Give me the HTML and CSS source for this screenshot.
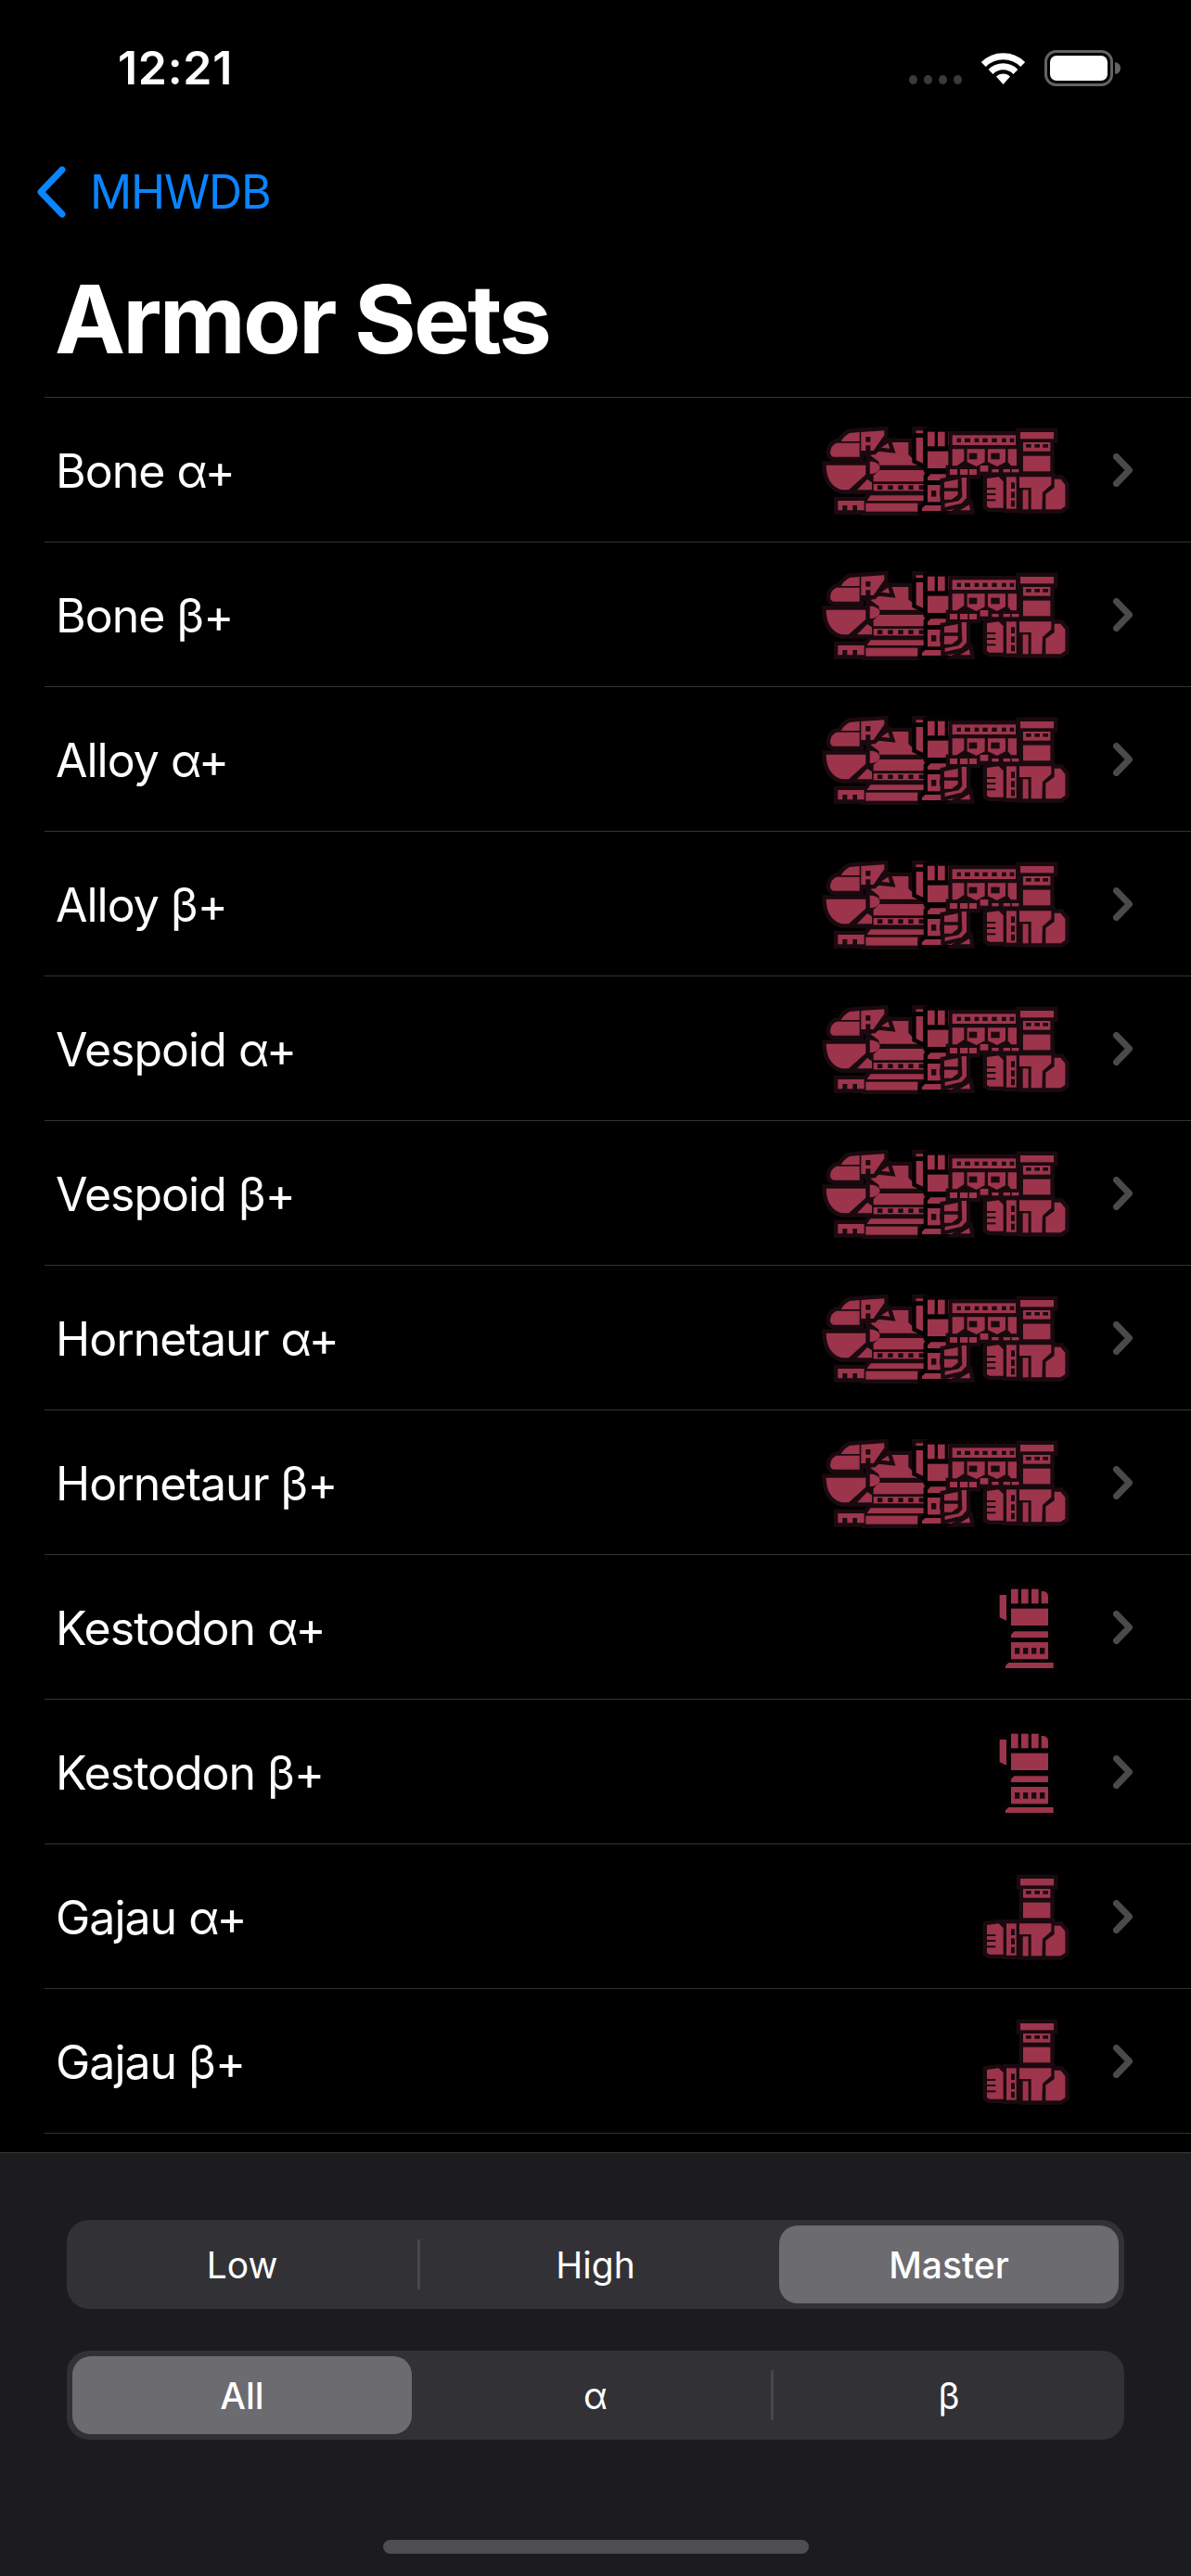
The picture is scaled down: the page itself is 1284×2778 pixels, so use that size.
FILE: index.html
```html
<!DOCTYPE html>
<html lang="en">
<head>
<meta charset="utf-8">
<title>Armor Sets</title>
<link rel="stylesheet" href="styles.css">
</head>
<body>
<svg class="defs" width="0" height="0" aria-hidden="true">
  <defs>
    <g id="chest-s" transform="translate(860 440) scale(.33333)">
      <polygon points="250,145 300,118 300,108 358,108 358,148 395,182 264,182 262,170 235,150"/>
      <path d="M232 170h10q22 4 24 20q-2 16-24 20h-10z"/>
      <polygon points="264,198 410,198 410,235 245,235 245,216"/>
      <rect x="245" y="243" width="165" height="22"/>
      <polygon points="225,295 236,280 410,280 410,297 225,297"/>
      <rect x="220" y="305" width="168" height="27"/>
      <polygon points="192,262 225,228 240,238 240,262"/>
      <polygon points="130,297 215,297 215,328 192,328 192,312 178,312 178,328 160,328 160,312 145,312 145,328 130,328"/>
      <rect x="383" y="70" width="22" height="8"/>
    </g>
    <g id="chest-h" transform="translate(860 440) scale(.33333)">
      <rect x="258" y="247" width="16" height="14"/><rect x="292" y="247" width="16" height="14"/><rect x="325" y="247" width="16" height="14"/><rect x="358" y="247" width="16" height="14"/><rect x="392" y="247" width="16" height="14"/>
    </g>
    <g id="head-s" transform="translate(860 440) scale(.33333)">
      <path d="M140 105q10-18 28-27l32-3v30z"/>
      <path d="M105 140q2-22 20-30h75v45h-85q-10-4-10-15z"/>
      <polygon points="205,75 280,70 280,85 245,135 205,135"/>
      <polygon points="270,125 292,110 298,128"/>
      <path d="M92 182h128v30l-55 50h-22q-50-14-51-80z"/>
    </g>
    <g id="head-h" transform="translate(860 440) scale(.33333)">
      <rect x="220" y="90" width="15" height="17"/><rect x="220" y="118" width="15" height="17"/>
    </g>
    <g id="arm-s" transform="translate(940 442) scale(.33333)">
      <polygon points="143,87 165,87 165,170 143,160"/>
      <rect x="180" y="68" width="23" height="47"/>
      <rect x="213" y="68" width="23" height="47"/>
      <rect x="246" y="68" width="23" height="47"/>
      <path d="M278 75h8q14 3 14 18v22h-22z"/>
      <rect x="180" y="131" width="120" height="55"/>
      <polygon points="190,205 300,205 300,225 180,225 180,215"/>
      <rect x="180" y="240" width="120" height="55"/>
      <polygon points="172,306 317,306 317,324 162,324 162,316"/>
    </g>
    <g id="arm-h" transform="translate(940 442) scale(.33333)">
      <rect x="192" y="258" width="16" height="20"/><rect x="219" y="258" width="16" height="20"/><rect x="246" y="258" width="16" height="20"/><rect x="273" y="258" width="16" height="20"/>
    </g>
    <g id="waist-s" transform="translate(860 440) scale(.33333)">
      <rect x="500" y="85" width="205" height="32"/>
      <polygon points="500,130 538,130 538,168 515,184 500,184"/>
      <polygon points="548,130 605,130 605,172 578,186 548,172"/>
      <polygon points="615,130 672,130 672,172 645,186 615,172"/>
      <polygon points="680,130 708,130 708,184 690,184 680,172"/>
      <rect x="492" y="195" width="24" height="18"/><rect x="525" y="195" width="25" height="18"/><rect x="555" y="195" width="24" height="18"/>
      <rect x="590" y="183" width="26" height="20"/><rect x="628" y="195" width="22" height="10"/><rect x="665" y="195" width="22" height="10"/><rect x="692" y="195" width="24" height="10"/>
      <polygon points="474,236 518,228 518,256 474,256"/>
      <polygon points="474,266 518,266 518,278 498,293 474,293"/>
      <polygon points="530,222 546,222 546,288 530,305 476,318 476,306 520,298 532,284"/>
      <polygon points="525,328 555,310 558,328"/>
    </g>
    <g id="waist-h" transform="translate(860 440) scale(.33333)">
      <rect x="515" y="95" width="13" height="13"/><rect x="540" y="95" width="18" height="13"/><rect x="572" y="95" width="14" height="13"/><rect x="598" y="95" width="16" height="13"/><rect x="628" y="95" width="16" height="13"/><rect x="660" y="95" width="14" height="13"/><rect x="686" y="95" width="14" height="13"/>
      <rect x="554" y="143" width="26" height="20"/><rect x="625" y="143" width="28" height="20"/>
    </g>
    <g id="legs-s" transform="translate(1030 450) scale(.33333)">
      <rect x="210" y="45" width="108" height="22"/>
      <rect x="219" y="78" width="88" height="29"/>
      <rect x="219" y="122" width="88" height="50"/>
      <polygon points="102,195 140,190 155,205 155,290 110,290 102,285"/>
      <rect x="165" y="190" width="32" height="103"/>
      <polygon points="207,190 310,190 310,215 282,240 280,295 245,295 245,225 207,225"/>
      <rect x="218" y="232" width="18" height="63"/>
      <polygon points="320,197 340,197 355,215 355,285 340,295 292,295 292,245 320,225"/>
    </g>
    <g id="legs-h" transform="translate(1030 450) scale(.33333)">
      <rect x="228" y="84" width="17" height="11"/><rect x="256" y="84" width="17" height="11"/><rect x="283" y="84" width="17" height="11"/>
      <rect x="102" y="225" width="28" height="6"/><rect x="102" y="243" width="28" height="6"/><rect x="102" y="262" width="28" height="6"/>
      <rect x="180" y="208" width="12" height="20"/><rect x="180" y="238" width="12" height="20"/><rect x="180" y="266" width="12" height="20"/>
    </g>
    <g id="chest"><use href="#chest-s" class="ol"/><use href="#chest-s" class="fl"/><use href="#chest-h" class="hole"/></g>
    <g id="head"><use href="#head-s" class="ol"/><use href="#head-s" class="fl"/><use href="#head-h" class="hole"/></g>
    <g id="arm"><use href="#arm-s" class="ol ol-dark"/><use href="#arm-s" class="fl"/><use href="#arm-h" class="hole"/></g>
    <g id="waist"><use href="#waist-s" class="ol"/><use href="#waist-s" class="fl"/><use href="#waist-h" class="hole"/></g>
    <g id="legs"><use href="#legs-s" class="ol"/><use href="#legs-s" class="fl"/><use href="#legs-h" class="hole"/></g>
    <g id="full"><use href="#chest"/><use href="#head"/><use href="#arm"/><use href="#waist"/><use href="#legs"/></g>
    <path id="chev" d="M3.5 3.5 L17.5 18 L3.5 32.5"/>
  </defs>
</svg>

<header class="status">
  <span class="time">12:21</span>
  <div class="status-icons">
    <svg class="dots" width="57" height="10" viewBox="0 0 57 10"><ellipse cx="4.5" cy="5" rx="4.5" ry="5"/><ellipse cx="20.5" cy="5" rx="4.5" ry="5"/><ellipse cx="36.5" cy="5" rx="4.5" ry="5"/><ellipse cx="52.5" cy="5" rx="4.5" ry="5"/></svg>
    <svg class="wifi" width="51" height="37" viewBox="0 0 51 37"><path class="arc" d="M4.3 15.5 A30 30 0 0 1 46.7 15.5"/><path class="arc" d="M12.1 23.4 A19 19 0 0 1 38.9 23.4"/><path class="wedge" d="M25.5 37 L18 28.5 A10.6 10.6 0 0 1 33 28.5Z"/></svg>
    <svg class="battery" width="83" height="39" viewBox="0 0 83 39"><rect class="shell" x="1.5" y="1.5" width="71" height="36" rx="11"/><rect class="charge" x="6" y="6" width="62" height="27" rx="7"/><path class="cap" d="M76 13q6 1 6 6.500t-6 6.500z"/></svg>
  </div>
</header>

<nav class="back">
  <svg class="back-chev" width="33" height="56" viewBox="0 0 33 56"><path d="M28 4 L5 28 L28 52"/></svg>
  <span class="back-label">MHWDB</span>
</nav>

<h1 class="title">Armor Sets</h1>

<ul class="list">
  <li class="row"><span class="name">Bone α+</span><svg class="set" viewBox="880 456 280 100"><use href="#full"/></svg><svg class="chevron" viewBox="0 0 21 36"><use href="#chev"/></svg></li>
  <li class="row"><span class="name">Bone β+</span><svg class="set" viewBox="880 456 280 100"><use href="#full"/></svg><svg class="chevron" viewBox="0 0 21 36"><use href="#chev"/></svg></li>
  <li class="row"><span class="name">Alloy α+</span><svg class="set" viewBox="880 456 280 100"><use href="#full"/></svg><svg class="chevron" viewBox="0 0 21 36"><use href="#chev"/></svg></li>
  <li class="row"><span class="name">Alloy β+</span><svg class="set" viewBox="880 456 280 100"><use href="#full"/></svg><svg class="chevron" viewBox="0 0 21 36"><use href="#chev"/></svg></li>
  <li class="row"><span class="name">Vespoid α+</span><svg class="set" viewBox="880 456 280 100"><use href="#full"/></svg><svg class="chevron" viewBox="0 0 21 36"><use href="#chev"/></svg></li>
  <li class="row"><span class="name">Vespoid β+</span><svg class="set" viewBox="880 456 280 100"><use href="#full"/></svg><svg class="chevron" viewBox="0 0 21 36"><use href="#chev"/></svg></li>
  <li class="row"><span class="name">Hornetaur α+</span><svg class="set" viewBox="880 456 280 100"><use href="#full"/></svg><svg class="chevron" viewBox="0 0 21 36"><use href="#chev"/></svg></li>
  <li class="row"><span class="name">Hornetaur β+</span><svg class="set" viewBox="880 456 280 100"><use href="#full"/></svg><svg class="chevron" viewBox="0 0 21 36"><use href="#chev"/></svg></li>
  <li class="row"><span class="name">Kestodon α+</span><svg class="set" viewBox="790 456 280 100"><use href="#arm"/></svg><svg class="chevron" viewBox="0 0 21 36"><use href="#chev"/></svg></li>
  <li class="row"><span class="name">Kestodon β+</span><svg class="set" viewBox="790 456 280 100"><use href="#arm"/></svg><svg class="chevron" viewBox="0 0 21 36"><use href="#chev"/></svg></li>
  <li class="row"><span class="name">Gajau α+</span><svg class="set" viewBox="880 456 280 100"><use href="#legs"/></svg><svg class="chevron" viewBox="0 0 21 36"><use href="#chev"/></svg></li>
  <li class="row"><span class="name">Gajau β+</span><svg class="set" viewBox="880 456 280 100"><use href="#legs"/></svg><svg class="chevron" viewBox="0 0 21 36"><use href="#chev"/></svg></li>
</ul>

<footer class="panel">
  <div class="segmented">
    <span class="seg">Low</span><i class="sep"></i><span class="seg">High</span><i class="sep sep-off"></i><span class="seg seg-on">Master</span>
  </div>
  <div class="segmented">
    <span class="seg seg-on">All</span><i class="sep sep-off"></i><span class="seg">α</span><i class="sep"></i><span class="seg">β</span>
  </div>
  <div class="home"></div>
</footer>
</body>
</html>
```

FILE: styles.css
```css
* { box-sizing: border-box; }
html, body { margin: 0; padding: 0; }
body {
  width: 1284px;
  height: 2778px;
  background: #000;
  color: #fff;
  font-family: Inter, "Noto Sans", sans-serif;
  overflow: hidden;
  display: flex;
  flex-direction: column;
}
.defs { position: absolute; }
.ol { fill: #1a0a0f; stroke: #1a0a0f; stroke-width: 26; stroke-linejoin: miter; }
.ol-dark { fill: #050203; stroke: #050203; }
.fl { fill: #9c344b; stroke: none; }
.hole { fill: #1a0a0f; stroke: none; }

.status {
  height: 179px;
  padding: 45px 75px 0 127px;
  display: flex;
  justify-content: space-between;
  align-items: flex-start;
  flex: none;
}
.time { font-size: 50px; font-weight: 600; line-height: 56px; letter-spacing: 0.7px; }
.status-icons { display: flex; align-items: flex-start; padding-top: 9px; }
.dots { fill: #3a3a3c; margin: 27px 19px 0 0; }
.wifi { margin-right: 19px; }
.arc { fill: none; stroke: #fff; stroke-width: 7; }
.wedge { fill: #fff; }
.shell { fill: none; stroke: #636366; stroke-width: 3; }
.charge { fill: #fff; }
.cap { fill: #636366; }

.back { height: 56px; padding-left: 39px; display: flex; align-items: center; gap: 25px; flex: none; }
.back-chev { fill: none; stroke: #0a84ff; stroke-width: 7; stroke-linecap: round; stroke-linejoin: round; flex: none; }
.back-label { color: #0a84ff; font-size: 50px; line-height: 56px; letter-spacing: -1.2px; }

.title {
  margin: 0;
  padding: 47px 0 0 59px;
  height: 193px;
  font-size: 102px;
  font-weight: 700;
  line-height: 124px;
  letter-spacing: -2.8px;
  flex: none;
}

.list { list-style: none; margin: 0 0 0 48px; padding: 0; flex: none; }
.row {
  height: 156px;
  border-top: 1px solid #333336;
  padding: 0 63px 0 12px;
  display: flex;
  align-items: center;
}
.row:last-child { border-bottom: 1px solid #333336; height: 157px; }
.name { font-size: 50px; line-height: 60px; margin-right: auto; padding-top: 3px; letter-spacing: -1px; }
.set { width: 280px; height: 100px; flex: none; overflow: hidden; }
.chevron { width: 21px; height: 36px; margin-left: 40px; flex: none; fill: none; stroke: #4a4a4d; stroke-width: 7; stroke-linecap: round; stroke-linejoin: round; }

.panel {
  margin-top: 20px;
  flex: 1;
  background: #1c1c1e;
  border-top: 1px solid #3a3a3c;
  padding: 72px 72px 0;
  display: flex;
  flex-direction: column;
  gap: 45px;
  position: relative;
}
.segmented {
  height: 96px;
  background: #323236;
  border-radius: 24px;
  padding: 6px;
  display: flex;
  align-items: center;
}
.seg {
  flex: 1;
  height: 84px;
  display: flex;
  align-items: center;
  justify-content: center;
  font-size: 39px;
  font-weight: 400;
  border-radius: 20px;
}
.seg-on { background: #6b6b70; font-weight: 500; }
.sep { width: 3px; height: 54px; margin: 0 6px; background: #48484c; flex: none; }
.sep-off { background: transparent; }
.home {
  position: absolute;
  left: 413px;
  bottom: 24px;
  width: 459px;
  height: 15px;
  border-radius: 8px;
  background: #4e4e50;
}
```
